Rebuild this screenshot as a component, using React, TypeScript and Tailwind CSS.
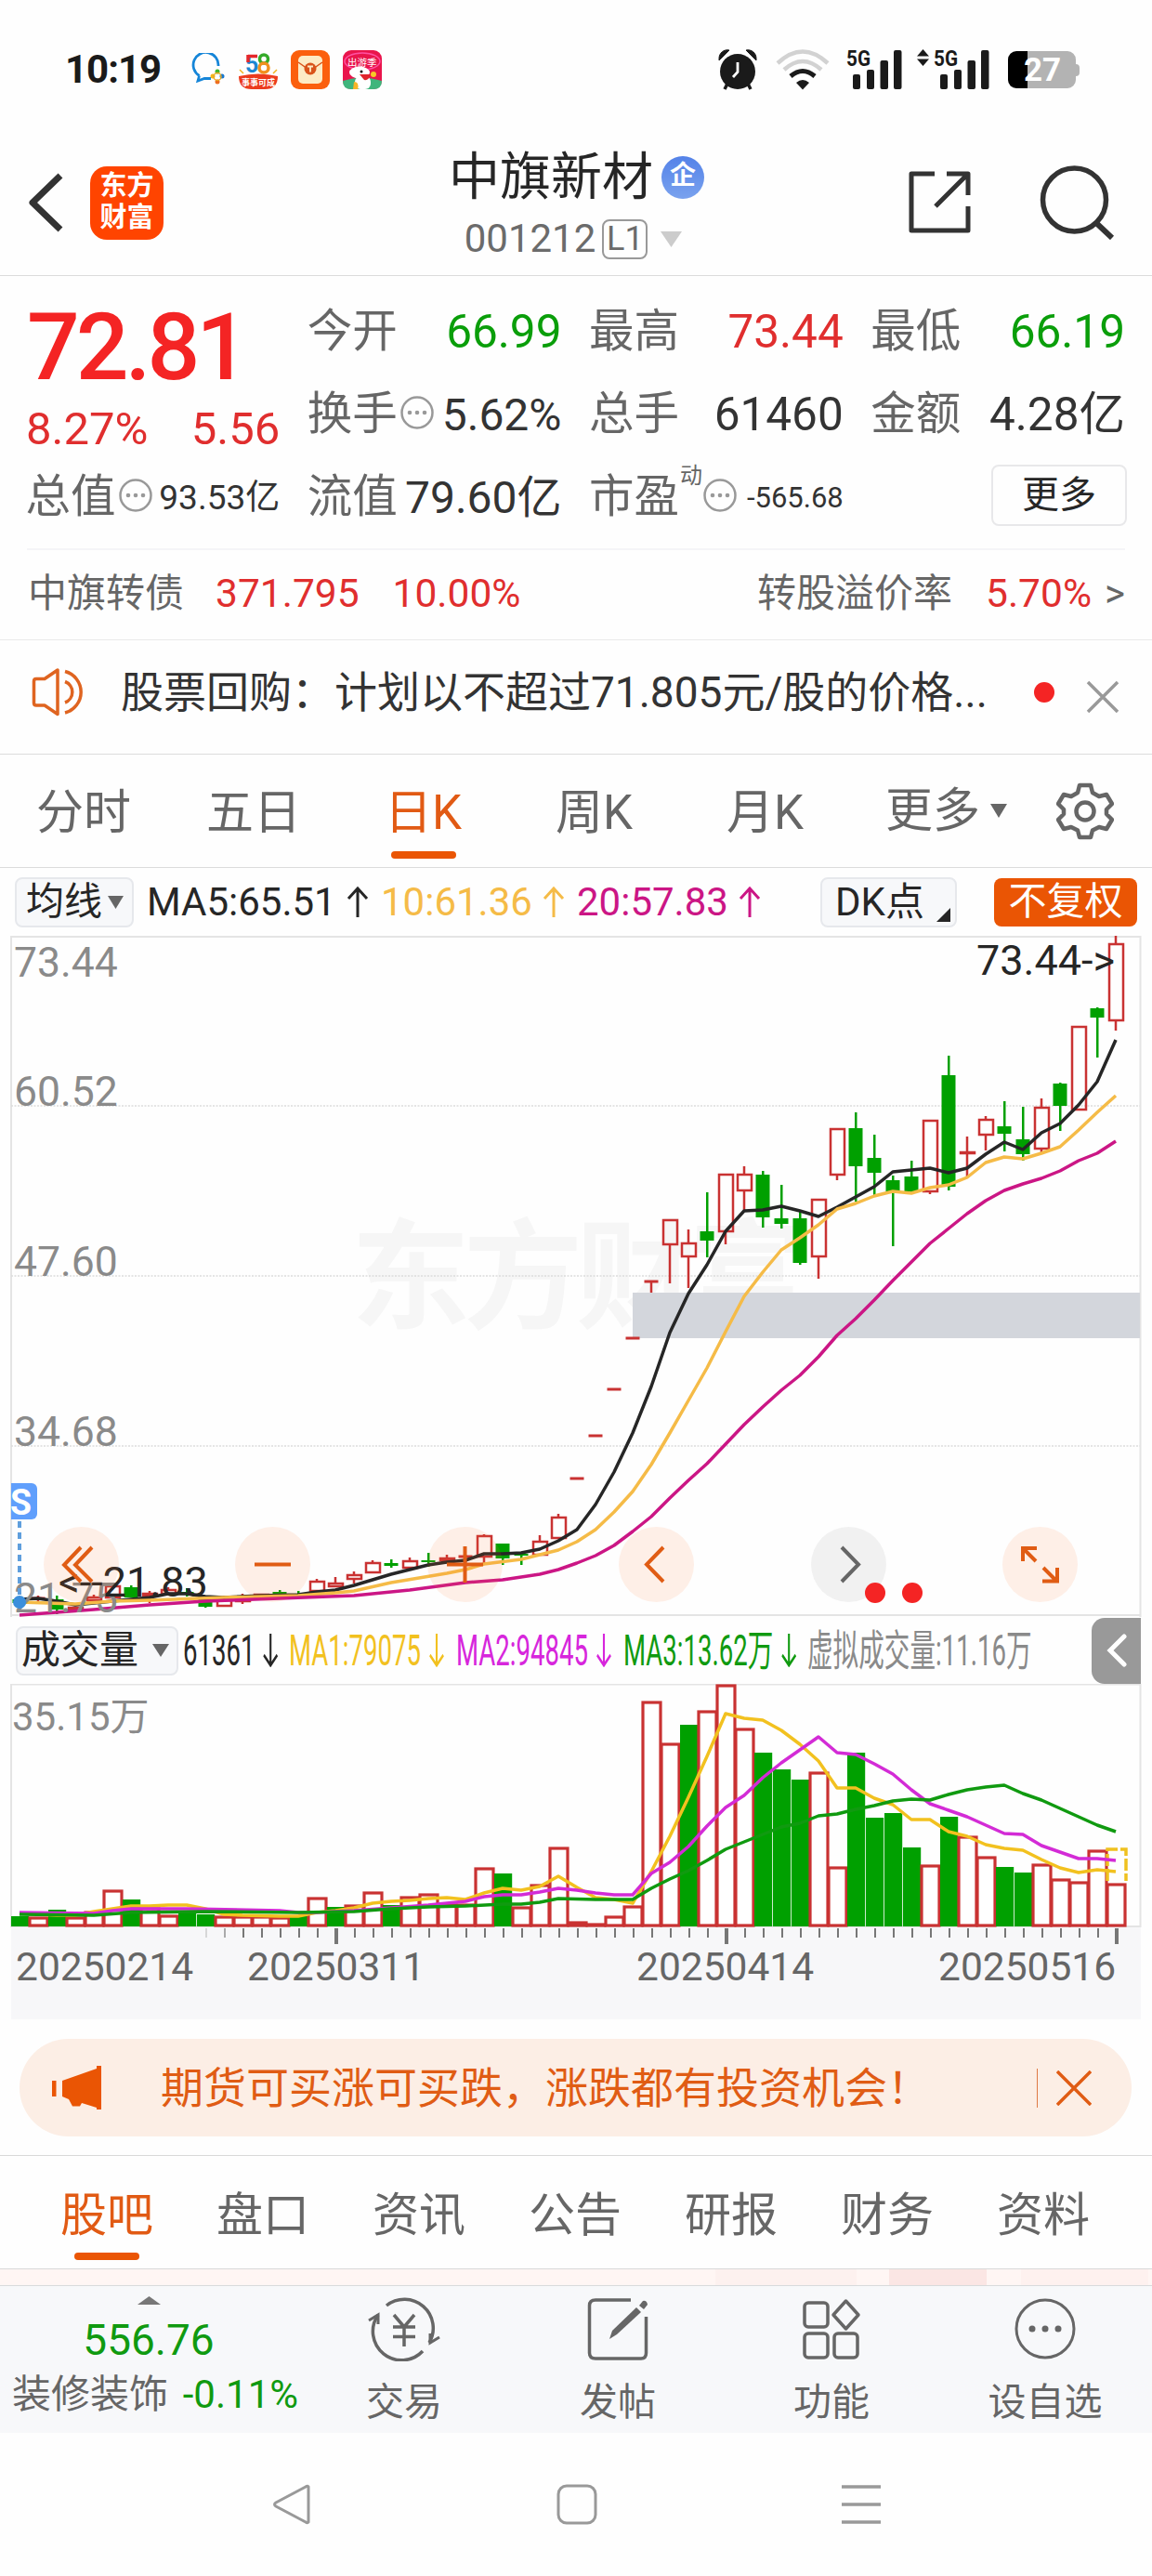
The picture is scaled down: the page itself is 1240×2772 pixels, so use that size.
import { ReactNode } from "react";

// [body top, body bottom, high, low, up?]
type Candle = [number, number, number, number, number];

const candles: Candle[] = [
  [1721, 1725, 1718, 1728, 0],
  [1720, 1722, 1717, 1724, 1],
  [1721, 1732, 1717, 1737, 0],
  [1729, 1733, 1729, 1733, 1],
  [1718, 1723, 1716, 1725, 1],
  [1706, 1720, 1703, 1720, 1],
  [1708, 1719, 1706, 1719, 0],
  [1714, 1718, 1712, 1725, 1],
  [1710, 1716, 1708, 1716, 1],
  [1713, 1716, 1709, 1718, 0],
  [1717, 1729, 1717, 1730, 0],
  [1721, 1729, 1717, 1729, 1],
  [1718, 1724, 1715, 1726, 1],
  [1715, 1718, 1715, 1718, 1],
  [1713, 1716, 1711, 1717, 0],
  [1715, 1717, 1712, 1718, 0],
  [1701, 1713, 1699, 1713, 1],
  [1703, 1708, 1697, 1708, 1],
  [1694, 1700, 1691, 1704, 1],
  [1681, 1693, 1679, 1693, 1],
  [1682, 1685, 1678, 1687, 0],
  [1679, 1688, 1676, 1688, 1],
  [1679, 1681, 1671, 1686, 0],
  [1676, 1680, 1673, 1680, 1],
  [1675, 1676, 1673, 1684, 1],
  [1652, 1676, 1651, 1682, 1],
  [1661, 1677, 1661, 1684, 0],
  [1672, 1674, 1670, 1684, 0],
  [1658, 1674, 1652, 1674, 1],
  [1632, 1656, 1629, 1656, 1],
  [1591, 1591, 1591, 1591, 1],
  [1545, 1545, 1545, 1545, 1],
  [1495, 1495, 1495, 1495, 1],
  [1440, 1440, 1440, 1440, 1],
  [1379, 1379, 1379, 1391, 1],
  [1312, 1340, 1312, 1381, 1],
  [1337, 1353, 1323, 1386, 1],
  [1325, 1335, 1283, 1353, 0],
  [1263, 1326, 1263, 1339, 1],
  [1263, 1282, 1255, 1303, 1],
  [1264, 1310, 1260, 1321, 0],
  [1311, 1317, 1275, 1322, 0],
  [1311, 1359, 1303, 1361, 0],
  [1290, 1353, 1290, 1376, 1],
  [1214, 1265, 1214, 1270, 1],
  [1214, 1255, 1197, 1293, 0],
  [1246, 1262, 1221, 1287, 0],
  [1270, 1282, 1265, 1341, 0],
  [1266, 1282, 1249, 1283, 0],
  [1205, 1283, 1205, 1285, 1],
  [1157, 1277, 1136, 1281, 0],
  [1239, 1242, 1223, 1266, 1],
  [1204, 1222, 1201, 1238, 1],
  [1212, 1220, 1185, 1239, 0],
  [1226, 1242, 1191, 1249, 0],
  [1191, 1237, 1182, 1240, 1],
  [1166, 1190, 1165, 1217, 0],
  [1104, 1195, 1104, 1195, 1],
  [1085, 1095, 1084, 1138, 0],
  [1015, 1099, 1007, 1109, 1],
];

const ma5 =
  "21,1721 41,1720 61,1723 81,1727 101,1725 121,1723 141,1721 161,1719 181,1715 201,1715 221,1718 241,1719 281,1717 321,1716 341,1713 361,1711 381,1706 401,1700 421,1694 441,1689 461,1684 481,1681 501,1679 521,1672 541,1672 561,1671 581,1667 601,1658 621,1646 641,1619 661,1584 681,1542 701,1492 721,1434 741,1392 761,1361 781,1325 801,1303 821,1302 841,1298 861,1303 881,1309 901,1299 921,1288 941,1277 961,1261 981,1259 1001,1257 1021,1262 1041,1257 1061,1242 1081,1229 1101,1237 1121,1219 1141,1209 1161,1189 1181,1164 1201,1119";
const ma10 =
  "21,1724 81,1726 121,1723 161,1722 241,1719 321,1717 361,1714 381,1712 421,1703 481,1693 501,1689 521,1683 561,1678 581,1673 601,1668 621,1659 641,1646 661,1627 681,1605 701,1576 721,1542 741,1507 761,1472 781,1433 801,1395 821,1369 841,1345 861,1332 881,1318 901,1301 921,1295 941,1287 961,1282 981,1284 1001,1278 1021,1275 1041,1267 1061,1251 1081,1245 1101,1247 1121,1241 1141,1234 1161,1216 1181,1197 1201,1179";
const ma20 =
  "21,1738 61,1735 101,1732 161,1727 221,1723 301,1720 381,1717 441,1711 501,1703 541,1700 581,1694 601,1689 621,1682 641,1674 661,1663 681,1648 701,1632 721,1612 741,1593 761,1575 781,1554 801,1533 821,1514 841,1496 861,1480 881,1460 901,1437 921,1419 941,1399 961,1378 981,1358 1001,1338 1021,1322 1041,1306 1061,1292 1081,1281 1101,1274 1121,1268 1141,1260 1161,1249 1181,1241 1201,1228";

// [top, up?]
const volumes: [number, number][] = [
  [2062, 0], [2063, 1], [2055, 0], [2063, 1], [2057, 1], [2034, 1], [2044, 0], [2053, 1], [2061, 1], [2058, 0],
  [2060, 0], [2062, 1], [2062, 1], [2062, 1], [2063, 1], [2062, 0], [2042, 1], [2052, 0], [2050, 1], [2036, 1],
  [2050, 0], [2041, 1], [2038, 1], [2049, 1], [2049, 1], [2010, 1], [2016, 0], [2052, 1], [2028, 1], [1988, 1],
  [2068, 1], [2070, 1], [2062, 1], [2051, 1], [1831, 1], [1876, 1], [1856, 0], [1841, 1], [1813, 1], [1860, 1],
  [1886, 0], [1904, 0], [1915, 0], [1907, 1], [2009, 1], [1886, 0], [1956, 0], [1951, 0], [1988, 0], [2007, 1],
  [1955, 0], [1976, 1], [1998, 1], [2009, 0], [2015, 0], [2006, 1], [2022, 1], [2025, 1], [1991, 1], [2027, 1],
];

const volMa1 =
  "21,2059 41,2060 61,2061 81,2061 101,2057 121,2054 141,2051 161,2051 181,2050 201,2050 221,2054 241,2060 261,2061 301,2062 321,2062 341,2058 361,2056 381,2053 401,2048 421,2046 441,2045 461,2043 481,2042 501,2044 521,2037 541,2032 561,2034 581,2030 601,2019 621,2031 641,2042 661,2044 681,2048 701,2014 721,1976 741,1934 761,1890 781,1844 801,1849 821,1851 841,1862 861,1877 881,1895 901,1924 921,1924 941,1935 961,1942 981,1958 1001,1958 1021,1971 1041,1976 1061,1985 1081,1989 1101,1991 1121,2001 1141,2010 1161,2015 1181,2012 1201,2014";
const volMa2 =
  "21,2058 101,2059 121,2056 141,2054 201,2054 301,2056 321,2058 341,2058 381,2056 421,2053 461,2050 501,2046 521,2041 541,2039 561,2039 581,2036 601,2032 621,2034 641,2037 661,2039 681,2039 701,2016 721,2004 741,1987 761,1965 781,1945 801,1932 821,1913 841,1897 861,1883 881,1869 901,1886 921,1888 941,1898 961,1909 981,1926 1001,1941 1021,1948 1041,1955 1061,1964 1081,1973 1101,1974 1121,1986 1141,1993 1161,2000 1181,2000 1201,2002";
const volMa3 =
  "21,2060 101,2061 141,2058 221,2057 321,2058 381,2057 421,2054 461,2052 501,2051 541,2049 561,2049 581,2047 601,2043 641,2044 681,2044 701,2032 721,2022 741,2013 761,2002 781,1990 801,1982 821,1974 841,1966 861,1962 881,1954 901,1952 921,1947 941,1943 961,1938 981,1936 1001,1937 1021,1931 1041,1926 1061,1923 1081,1921 1101,1930 1121,1937 1141,1946 1161,1955 1181,1964 1201,1971";

const barX = (i: number) => 21 + i * 20;

const SignalBars = () => (
  <svg width="60" height="44" viewBox="0 0 60 44" className="block overflow-visible">
    <text x="0" y="18" fontSize="23" fontWeight="700" fill="#1a1a1a" textLength="26" lengthAdjust="spacingAndGlyphs">
      5G
    </text>
    <rect x="7" y="27" width="8" height="16" rx="2" fill="#1a1a1a" />
    <rect x="22" y="22" width="8" height="21" rx="2" fill="#1a1a1a" />
    <rect x="36.5" y="12" width="8.500" height="31" rx="2" fill="#1a1a1a" />
    <rect x="51" y="1" width="8.500" height="42" rx="2" fill="#1a1a1a" />
  </svg>
);

const StatusBar = () => (
  <div className="h-[140px] pt-[10px] pl-[70px] pr-[77px] flex items-center justify-between">
    <div className="flex items-center">
      <span className="text-[42px] leading-none font-bold text-[#1a1a1a] w-[136px] -tracking-[1px]">10:19</span>
      <svg width="36" height="36" viewBox="0 0 36 36" className="mr-[15px]">
        <path d="M8.500 24.500 A13.500 13.500 0 1 1 29 14 M8.500 24.500 L7 30 L14 27.500 L21 27.500" fill="none" stroke="#1585d8" strokeWidth="2.800" />
        <circle cx="28" cy="20" r="2.500" fill="#3fb52a" />
        <circle cx="33" cy="25" r="2.500" fill="#1678d2" />
        <circle cx="28" cy="31" r="2.500" fill="#ee6d1f" />
        <circle cx="23" cy="25" r="2.500" fill="#f5b61c" />
        <circle cx="28" cy="25.500" r="4" fill="none" stroke="#e9a722" strokeWidth="1.500" />
      </svg>
      <svg width="42" height="42" viewBox="0 0 42 42" className="mr-[14px] overflow-visible">
        <text x="7" y="24" fontSize="25" fontWeight="700" fill="#1b87d2">5</text>
        <path d="M10 6.500 h10 M10 5 v8" stroke="#e5262a" strokeWidth="3.500" fill="none" />
        <circle cx="27" cy="9.500" r="4.500" fill="none" stroke="#35aa29" strokeWidth="3.500" />
        <circle cx="27" cy="19" r="5" fill="none" stroke="#f1901d" strokeWidth="3.500" />
        <path d="M1 21 l4 4 M41 21 l-4 4" stroke="#f1b51d" strokeWidth="1.500" />
        <path d="M0 28 Q21 23 42 28 Q42 42 28 42 H14 Q0 42 0 28Z" fill="#ec3b1d" />
        <text x="3" y="37.500" fontSize="9" fontWeight="700" fill="#fff">事事可成</text>
      </svg>
      <svg width="42" height="42" viewBox="0 0 42 42" className="mr-[14px]">
        <rect width="42" height="42" rx="9" fill="#fb5f0d" />
        <rect x="8" y="6" width="26" height="30" rx="5" fill="#fdebc5" />
        <path d="M8 13 L21 22 L34 13" fill="none" stroke="#d9531a" strokeWidth="1.500" />
        <circle cx="21" cy="20" r="6.500" fill="#d9531a" />
        <path d="M18 17.500 h6 M21 17.500 v6" stroke="#fdebc5" strokeWidth="1.800" />
      </svg>
      <svg width="42" height="42" viewBox="0 0 42 42">
        <rect width="42" height="42" rx="9" fill="#e9154c" />
        <path d="M0 33 Q21 26 42 33 Q42 42 33 42 H9 Q0 42 0 33Z" fill="#3fb57c" />
        <ellipse cx="21" cy="12" rx="19" ry="9" fill="none" stroke="#ff4fa0" strokeWidth="1.500" />
        <text x="5" y="16.500" fontSize="10.500" fill="#fff">出游季</text>
        <ellipse cx="18" cy="24" rx="11" ry="6.500" fill="#fff" />
        <rect x="13" y="28" width="17" height="14" rx="6" fill="#fff" />
        <path d="M18 26 h12 q-2 7 -7 6z" fill="#e0242c" />
        <circle cx="20" cy="23" r="1.500" fill="#111" />
        <circle cx="33" cy="26" r="3" fill="#f7c927" />
        <path d="M12 34 q6 0 4 8 h-5z" fill="#f7b527" />
      </svg>
    </div>
    <div className="flex items-center">
      <svg width="42" height="44" viewBox="0 0 42 44" className="mr-[20px]">
        <path d="M1 10 A9 9 0 0 1 12 1 L1 12Z M41 10 A9 9 0 0 0 30 1 L41 12Z" fill="#1a1a1a" stroke="#1a1a1a" strokeWidth="1" />
        <circle cx="21" cy="24" r="19" fill="#1a1a1a" />
        <path d="M10 37 L7 43 M32 37 L35 43" stroke="#1a1a1a" strokeWidth="3.500" />
        <path d="M21 14 V24.500 L16 30" fill="none" stroke="#fff" strokeWidth="2.800" />
      </svg>
      <svg width="58" height="44" viewBox="0 0 58 44" className="mr-[18px]">
        <path d="M2 15 Q29 -10 56 15" fill="none" stroke="#d2d2d2" strokeWidth="4.500" />
        <path d="M9 22 Q29 4 49 22" fill="none" stroke="#d2d2d2" strokeWidth="4.500" />
        <path d="M16 29 Q29 18 42 29" fill="none" stroke="#1a1a1a" strokeWidth="5" />
        <path d="M22 36 Q29 30 36 36 L29 43.500Z" fill="#1a1a1a" />
      </svg>
      <SignalBars />
      <svg width="13" height="44" viewBox="0 0 13 44" className="ml-[16px] mr-[5px]">
        <path d="M6.500 0 L13 7.500 H0Z M6.500 18 L13 10.500 H0Z" fill="#1a1a1a" />
      </svg>
      <SignalBars />
      <svg width="78" height="40" viewBox="0 0 78 40" className="ml-[20px] overflow-visible">
        <path d="M21 0 H64 a9 9 0 0 1 9 9 V14 a4 4 0 0 1 4 4 V23 a4 4 0 0 1 -4 4 V31 a9 9 0 0 1 -9 9 H21Z" fill="#b3b3b3" />
        <path d="M21 0 H9 a9 9 0 0 0 -9 9 V31 a9 9 0 0 0 9 9 H21Z" fill="#000" />
        <text x="17" y="32" fontSize="35" fontWeight="700" fill="#fff">27</text>
      </svg>
    </div>
  </div>
);

const Header = () => (
  <div className="h-[157px] border-b border-[#dcdcdc] flex items-center justify-between pl-[30px] pr-[38px]">
    <div className="flex items-center w-[232px]">
      <svg width="40" height="64" viewBox="0 0 40 64" className="mr-[27px]">
        <path d="M35 3 L5 32 L35 61" fill="none" stroke="#333" strokeWidth="7" strokeLinejoin="round" />
      </svg>
      <div className="w-[79px] h-[79px] rounded-[18px] bg-[#ff4400] text-white font-bold text-[29px] leading-[34px] flex flex-col items-center justify-center pb-[3px]">
        <span>东方</span>
        <span>财富</span>
      </div>
    </div>
    <div className="flex flex-col items-center">
      <div className="flex items-center gap-[9px] pl-[1px]">
        <span className="text-[55px] leading-[64px] text-[#262626] pb-[5px]">中旗新材</span>
        <span className="w-[46px] h-[46px] mb-[3px] rounded-full bg-gradient-to-b from-[#5482e8] to-[#7aa2ee] text-white font-bold text-[28px] leading-[42px] text-center">
          企
        </span>
      </div>
      <div className="flex items-center mt-[9px] -ml-[5px]">
        <span className="text-[42px] leading-none text-[#6b6b6b]">001212</span>
        <span className="ml-[7px] w-[49px] h-[43px] border-2 border-[#999] rounded-[8px] text-[36px] leading-[39px] text-center text-[#6b6b6b]">
          L1
        </span>
        <svg width="25" height="17" viewBox="0 0 25 17" className="ml-[13px]">
          <path d="M1 0 H24 L12.500 17Z" fill="#ccc" />
        </svg>
      </div>
    </div>
    <div className="flex items-center w-[224px] gap-[73px]">
      <svg width="68" height="68" viewBox="0 0 68 68" className="shrink-0">
        <path d="M28 3 H3 V64 H64 V38 M41 3 H64 V26 M63 4 L29 38" fill="none" stroke="#333" strokeWidth="5" strokeLinejoin="round" />
      </svg>
      <svg width="82" height="80" viewBox="0 0 82 80" className="shrink-0">
        <circle cx="37.500" cy="37" r="34" fill="none" stroke="#333" strokeWidth="5.500" />
        <path d="M60 61 L78 78" stroke="#333" strokeWidth="6" />
      </svg>
    </div>
  </div>
);

const InfoIcon = ({ className }: { className?: string }) => (
  <svg width="36" height="36" viewBox="0 0 36 36" className={`shrink-0 relative -top-[3px] ${className ?? ""}`}>
    <circle cx="18" cy="18" r="16.500" fill="none" stroke="#999" strokeWidth="2.500" />
    <circle cx="10" cy="18" r="2.300" fill="#999" />
    <circle cx="18" cy="18" r="2.300" fill="#999" />
    <circle cx="26" cy="18" r="2.300" fill="#999" />
  </svg>
);

interface CellProps {
  label: ReactNode;
  value: string;
  valueClass: string;
}

const Cell = ({ label, value, valueClass }: CellProps) => (
  <div className="h-[89px] flex items-center justify-between whitespace-nowrap leading-none">
    <span className="flex items-center text-[48.5px] text-[#666] -ml-[1.5px]">{label}</span>
    <span className={valueClass}>{value}</span>
  </div>
);

const Quote = () => (
  <div className="pt-[16px] px-[29px]">
    <div className="grid grid-cols-4 gap-x-[31px]">
      <div className="flex flex-col">
        <div className="h-[118px] pt-[3px] flex items-center text-[100px] leading-none font-medium -tracking-[4px] text-[#f42424]">
          72.81
        </div>
        <div className="h-[60px] flex items-center justify-between text-[49px] leading-none text-[#e02e2e] -ml-[1px]">
          <span>8.27%</span>
          <span>5.56</span>
        </div>
        <Cell label={<>总值<InfoIcon className="ml-[3px]" /></>} value="93.53亿" valueClass="text-[37px] text-[#333]" />
      </div>
      <div>
        <Cell label="今开" value="66.99" valueClass="text-[49.5px] text-[#0a9e0a]" />
        <Cell label={<>换手<InfoIcon className="ml-[3px]" /></>} value="5.62%" valueClass="text-[48px] text-[#333]" />
        <Cell label="流值" value="79.60亿" valueClass="text-[48px] text-[#333]" />
      </div>
      <div>
        <Cell label="最高" value="73.44" valueClass="text-[49.5px] text-[#e02e2e]" />
        <Cell label="总手" value="61460" valueClass="text-[49.5px] text-[#333]" />
        <Cell
          label={
            <>
              市盈<span className="text-[24px] self-start -mt-[11px] ml-[1px]">动</span>
              <InfoIcon className="ml-[1px]" />
            </>
          }
          value="-565.68"
          valueClass="text-[31px] text-[#333]"
        />
      </div>
      <div>
        <Cell label="最低" value="66.19" valueClass="text-[49.5px] text-[#0a9e0a]" />
        <Cell label="金额" value="4.28亿" valueClass="text-[49.5px] text-[#333]" />
        <div className="h-[89px] flex items-center justify-end pb-[5px]">
          <button className="w-[146px] h-[66px] -mr-[2px] border-2 border-[#e8e8ea] rounded-[8px] text-[40px] leading-none text-[#262626]">
            更多
          </button>
        </div>
      </div>
    </div>
    <div className="h-[2px] mt-[10px] bg-[#f5f5f7]" />
  </div>
);

const BondRow = () => (
  <div className="h-[97px] pb-[2px] pl-[30px] pr-[29px] border-b border-[#eaeaea] flex items-center text-[42px] leading-none text-[#666]">
    <span>中旗转债</span>
    <span className="ml-[34px] text-[42.5px] text-[#e02e2e]">371.795</span>
    <span className="ml-[36px] text-[42.5px] text-[#e02e2e]">10.00%</span>
    <span className="ml-auto">转股溢价率</span>
    <span className="ml-[36px] text-[42.5px] text-[#e02e2e]">5.70%</span>
    <span className="ml-[14px]">&gt;</span>
  </div>
);

const NoticeRow = () => (
  <div className="h-[123px] pb-[11px] pl-[34px] pr-[35px] border-b border-[#dcdcdc] flex items-center text-[46px] leading-none text-[#333]">
    <svg width="60" height="52" viewBox="0 0 60 52">
      <path d="M2.500 14 Q2.500 11.500 5 11.500 H14 L28 2 V49.500 L14 40 H5 Q2.500 40 2.500 37.500Z" fill="none" stroke="#df6420" strokeWidth="3.500" strokeLinejoin="round" />
      <path d="M36 14.500 A12 12 0 0 1 36 37 M36 3.500 A23 23 0 0 1 36 48" fill="none" stroke="#df6420" strokeWidth="3.500" />
    </svg>
    <span className="ml-[36px] whitespace-nowrap">股票回购：计划以不超过71.805元/股的价格...</span>
    <span className="ml-auto w-[22px] h-[22px] rounded-full bg-[#f42424]" />
    <svg width="36" height="36" viewBox="0 0 36 36" className="ml-[34px] relative top-[5px]">
      <path d="M2 2 L34 34 M34 2 L2 34" stroke="#999" strokeWidth="3.500" />
    </svg>
  </div>
);

const periods = ["分时", "五日", "日K", "周K", "月K"];

const PeriodTabs = () => (
  <div className="h-[122px] border-b border-[#dcdcdc] pl-[39px] pr-[41px] flex text-[51px] leading-none text-[#666]">
    {periods.map((p) => (
      <div key={p} className={p.endsWith("K") ? "w-[184px] h-full" : "w-[183px] h-full"}>
        <div className={`h-[104px] pt-[37px] ${p.endsWith("K") ? "pl-[9px]" : ""} ${p === "日K" ? "text-[#e15a14]" : ""}`}>
          {p}
        </div>
        {p === "日K" && <div className="w-[70px] h-[8px] rounded-full bg-[#ea5504] ml-[16px]" />}
      </div>
    ))}
    <div className="h-full flex items-center -ml-[4px]">
      更多
      <svg width="18" height="15" viewBox="0 0 18 15" className="ml-[11px]">
        <path d="M0 0 H18 L9 15Z" fill="#666" />
      </svg>
    </div>
    <svg width="62" height="62" viewBox="0 0 62 62" className="ml-auto self-center">
      <path
        d="M25 3 H37 L39 11 L46 15 L54 13 L60 23 L54 29 V34 L60 40 L54 50 L46 48 L39 51.500 L37 59 H25 L23 51.500 L16 48 L8 50 L2 40 L8 34 V29 L2 23 L8 13 L16 15 L23 11Z"
        fill="none"
        stroke="#666"
        strokeWidth="4.500"
        strokeLinejoin="round"
      />
      <circle cx="31" cy="31" r="9.500" fill="none" stroke="#666" strokeWidth="4.500" />
    </svg>
  </div>
);

const UpArrow = ({ className }: { className: string }) => (
  <svg width="24" height="34" viewBox="0 0 24 34" className={className}>
    <path d="M12 33 V2 M2 13 L12 2 L22 13" fill="none" stroke="currentColor" strokeWidth="3" />
  </svg>
);

const MaRow = () => (
  <div className="h-[73px] pl-[16px] pr-[16px] flex items-center text-[42px] leading-none text-[#262626]">
    <div className="w-[128px] h-[54px] rounded-[8px] border-2 border-[#e6e8ec] bg-[#f7f8fa] flex items-center pl-[10px]">
      <span className="text-[41px]">均线</span>
      <svg width="17" height="14" viewBox="0 0 17 14" className="ml-[6px]">
        <path d="M0 0 H17 L8.500 14Z" fill="#666" />
      </svg>
    </div>
    <span className="ml-[14px] w-[217px]">MA5:65.51</span>
    <UpArrow className="-ml-[2px]" />
    <span className="ml-[13px] w-[175px] text-[#f5bb47]">10:61.36</span>
    <UpArrow className="text-[#f5bb47] -ml-[1px]" />
    <span className="ml-[13px] w-[175px] text-[#cb1685]">20:57.83</span>
    <UpArrow className="text-[#cb1685] -ml-[1px]" />
    <div className="ml-auto w-[147px] h-[54px] rounded-[8px] border-2 border-[#e6e8ec] bg-[#f7f8fa] flex items-center justify-between pl-[14px] pr-[5px]">
      DK点
      <svg width="15" height="15" viewBox="0 0 15 15" className="self-end mb-[4px]">
        <path d="M15 0 V15 H0Z" fill="#262626" />
      </svg>
    </div>
    <div className="ml-[40px] w-[154px] h-[52px] rounded-[8px] bg-[#ea5504] text-white text-[41px] flex items-center justify-center">
      不复权
    </div>
  </div>
);

const CandleChart = () => (
  <svg width="1240" height="733" viewBox="0 1007 1240 733" className="block">
    <text x="378" y="1420" fontSize="128" fontWeight="700" fill="#f6f6f6" letterSpacing="-7">
      东方财富
    </text>
    <path d="M12 1740 V1008 H1227.500 V1740" fill="none" stroke="#e4e4e4" strokeWidth="2" />
    <path d="M12 1738 H1227" stroke="#e4e4e4" strokeWidth="2" />
    {[1190, 1373, 1556].map((y) => (
      <path key={y} d={`M12 ${y} H1227`} stroke="#dcdcdc" strokeWidth="1.500" strokeDasharray="2 1.500" />
    ))}
    <rect x="681" y="1391" width="546" height="49" fill="#d3d6dc" />
    {candles.map(([top, bottom, high, low, up], i) => {
      const x = barX(i);
      if (up) {
        return (
          <g key={i} stroke="#c93232" strokeWidth="2.500" fill="none">
            <path d={`M${x} ${high} V${top} M${x} ${bottom} V${low}`} />
            {bottom - top < 3 ? (
              <path d={`M${x - 7.500} ${top} h15`} strokeWidth="3" />
            ) : (
              <rect x={x - 7} y={top + 1} width="15" height={bottom - top - 2} />
            )}
          </g>
        );
      }
      return (
        <g key={i} fill="#00a000">
          <rect x={x - 1} y={high} width="2.500" height={low - high} />
          <rect x={x - 7.500} y={top} width="15" height={bottom - top} />
        </g>
      );
    })}
    <g fill="none" strokeWidth="3.500" strokeLinejoin="round">
      <polyline points={ma5} stroke="#262626" />
      <polyline points={ma10} stroke="#f5bb47" />
      <polyline points={ma20} stroke="#cb1685" />
    </g>
    <g fontSize="44.500" fill="#8a8a8a">
      <text x="15" y="1051">73.44</text>
      <text x="15" y="1190">60.52</text>
      <text x="15" y="1373">47.60</text>
      <text x="15" y="1556">34.68</text>
      <text x="15" y="1735">21.75</text>
    </g>
    <g fontSize="45" fill="#262626">
      <text x="1051" y="1049">73.44-&gt;</text>
      <text x="63" y="1718">&lt;--21.83</text>
    </g>
    <path d="M21 1637 V1718" stroke="#5f9fdd" strokeWidth="4" strokeDasharray="7 5" />
    <circle cx="21" cy="1724" r="7" fill="#3b8fdc" />
    <path d="M12 1596 H34 a6 6 0 0 1 6 6 V1629 a6 6 0 0 1 -6 6 H12Z" fill="#609ffc" />
    <text x="11" y="1630" fontSize="38" fontWeight="700" fill="#fff" textLength="23" lengthAdjust="spacingAndGlyphs">
      S
    </text>
  </svg>
);

const controls: { name: string; d: string; gray?: boolean }[] = [
  { name: "oldest", d: "M40 22 L22 41 L40 59 M52 22 L34 41 L52 59" },
  { name: "zoomOut", d: "M21 40.500 H60" },
  { name: "zoomIn", d: "M21 40.500 H60 M40.500 21 V60" },
  { name: "prev", d: "M48 22 L30 40.500 L48 59" },
  { name: "next", d: "M33 22 L51 40.500 L33 59", gray: true },
  { name: "full", d: "M22 37 V23 H37 M22 23 L36 37 M44 44 L58 58 M59 44 V58.500 H43" },
];

const ChartArea = () => (
  <div className="relative">
    <CandleChart />
    <div className="absolute left-[47px] right-[80px] top-[636px] flex justify-between">
      {controls.map((c) => (
        <svg key={c.name} width="81" height="81" viewBox="0 0 81 81">
          <circle cx="40.500" cy="40.500" r="40.500" fill={c.gray ? "#000" : "#ff7a2a"} fillOpacity={c.gray ? 0.05 : 0.11} />
          <path d={c.d} fill="none" stroke={c.gray ? "#666" : "#e05c14"} strokeWidth="4" />
        </svg>
      ))}
    </div>
    <div className="absolute left-[931px] top-[696px] flex gap-[18px]">
      <span className="w-[22px] h-[22px] rounded-full bg-[#f42424]" />
      <span className="w-[22px] h-[22px] rounded-full bg-[#f42424]" />
    </div>
  </div>
);

const volumeItems = [
  { text: "61361", arrow: true, box: "w-[114px] text-[#262626]" },
  { text: "MA1:79075", arrow: true, box: "w-[180px] text-[#f2c11f]" },
  { text: "MA2:94845", arrow: true, box: "w-[180px] text-[#d726dc]" },
  { text: "MA3:13.62万", arrow: true, box: "w-[198px] text-[#109a10]" },
  { text: "虚拟成交量:11.16万", arrow: false, box: "w-[240px] text-[#8a8a8a]" },
];

const VolumeHeader = () => (
  <div className="h-[72px] pl-[17px] pr-[12px] flex items-center leading-none">
    <div className="w-[175px] h-[53px] rounded-[8px] border-2 border-[#e6e8ec] bg-[#f7f8fa] flex items-center pl-[4px] text-[42px] text-[#262626]">
      成交量
      <svg width="18" height="14" viewBox="0 0 18 14" className="ml-[15px]">
        <path d="M0 0 H18 L9 14Z" fill="#666" />
      </svg>
    </div>
    <div className="flex ml-[5px]">
      {volumeItems.map((v) => (
        <div key={v.text} className={v.box}>
          <span className="flex items-center w-max origin-left scale-x-[0.6] text-[46px]">
            {v.text}
            {v.arrow && (
              <svg width="28" height="36" viewBox="0 0 28 36" className="ml-[14px]">
                <path d="M14 0 V34 M2 23 L14 34 L26 23" fill="none" stroke="currentColor" strokeWidth="3.500" />
              </svg>
            )}
          </span>
        </div>
      ))}
    </div>
    <div className="ml-auto w-[53px] h-[71px] rounded-l-[14px] bg-[#999] flex items-center justify-center">
      <svg width="22" height="36" viewBox="0 0 22 36">
        <path d="M19 3 L4 18 L19 33" fill="none" stroke="#fff" strokeWidth="5" strokeLinecap="round" />
      </svg>
    </div>
  </div>
);

const ticks = Array.from({ length: 50 }, (_, i) => 222 + i * 20);

const VolumeChart = () => (
  <svg width="1240" height="361" viewBox="0 1812 1240 361" className="block">
    <path d="M12 2073 V1812.500 H1227.500 V2073Z" fill="none" stroke="#e4e4e4" strokeWidth="2" />
    <rect x="12" y="2074" width="1216" height="99" fill="#f7f7f9" />
    <text x="13" y="1862" fontSize="42" fill="#8a8a8a">
      35.15万
    </text>
    {volumes.map(([top, up], i) =>
      up ? (
        <rect key={i} x={barX(i) - 9} y={top + 1} width="19" height={2071 - top} fill="#fff" stroke="#c93232" strokeWidth="3.200" />
      ) : (
        <rect key={i} x={barX(i) - 9} y={top} width="19.200" height={2073 - top} fill="#00a000" />
      ),
    )}
    <path d="M1192 2024 V1990 H1212 V2024" fill="none" stroke="#efc11f" strokeWidth="3.500" strokeDasharray="13 3" />
    <g fill="none" strokeWidth="3.500" strokeLinejoin="round">
      <polyline points={volMa1} stroke="#f2c11f" />
      <polyline points={volMa2} stroke="#d32bd6" />
      <polyline points={volMa3} stroke="#109a10" />
    </g>
    {ticks.map((x, i) => {
      const major = [362, 782, 1202].includes(x);
      return (
        <path
          key={x}
          d={`M${x} 2075 V${major ? 2092 : 2085}`}
          stroke="#777"
          strokeOpacity={i === 0 ? 0.25 : i === 1 ? 0.6 : 1}
          strokeWidth={major ? 4 : 2}
        />
      );
    })}
    <g fontSize="42.500" fill="#666">
      <text x="17" y="2131">20250214</text>
      <text x="266" y="2131">20250311</text>
      <text x="685" y="2131">20250414</text>
      <text x="1010" y="2131">20250516</text>
    </g>
  </svg>
);

const Banner = () => (
  <div className="mt-[21px] ml-[21px] mr-[22px] h-[105px] rounded-full bg-[#fceee5] flex items-center pl-[35px] pr-[43px] text-[46px] leading-none text-[#e05c14]">
    <svg width="54" height="48" viewBox="0 0 54 48">
      <path d="M0 16 H4.500 V33 H0Z M11 16 L48 3 V0 H53 V47 H48 L48 45 L32 40 L30 43.500 H22 L18 36 L11 33Z" fill="#ea5504" />
    </svg>
    <span className="ml-[63px] whitespace-nowrap">期货可买涨可买跌，涨跌都有投资机会！</span>
    <span className="ml-auto w-[1.5px] h-[42px] bg-[#df7a45]" />
    <svg width="38" height="38" viewBox="0 0 38 38" className="ml-[20px]">
      <path d="M1 1 L37 37 M37 1 L1 37" stroke="#e05c14" strokeWidth="3.500" />
    </svg>
  </div>
);

const sections = ["股吧", "盘口", "资讯", "公告", "研报", "财务", "资料"];

const SectionTabs = () => (
  <div className="mt-[20px] h-[123px] border-y border-[#d8d8d8] flex pl-[31px] pr-[33px] text-[50px] leading-none text-[#666]">
    {sections.map((s, i) => (
      <div key={s} className="flex-1 flex flex-col items-center">
        <div className={i === 0 ? "h-[104px] pt-[39px] text-[#e15a14]" : "h-[104px] pt-[39px]"}>{s}</div>
        {i === 0 && <div className="w-[70px] h-[8px] rounded-full bg-[#ea5504]" />}
      </div>
    ))}
  </div>
);

const PinkStrip = () => (
  <div className="h-[18px] bg-[#fff6f4] border-b border-[#d8dadc] flex">
    <div className="ml-[770px] w-[152px] bg-[#fdf1ef]" />
    <div className="ml-[35px] w-[105px] bg-[#fbe6e4]" />
    <div className="ml-[37px] w-[137px] bg-[#fef1ef]" />
  </div>
);

const Action = ({ label, children }: { label: string; children: ReactNode }) => (
  <div className="w-[230px] h-full flex flex-col items-center pt-[11px]">
    <svg width="80" height="70" viewBox="0 0 80 70" fill="none" stroke="#666" strokeWidth="3.500">
      {children}
    </svg>
    <span className="mt-[24px] text-[41px] leading-none text-[#666]">{label}</span>
  </div>
);

const BottomBar = () => (
  <div className="h-[158px] bg-[#f7f8fa] flex leading-none">
    <div className="w-[320px] flex flex-col items-center pt-[11px]">
      <svg width="25" height="9" viewBox="0 0 25 9">
        <path d="M12.500 0 L25 9 H0Z" fill="#777" />
      </svg>
      <span className="mt-[15px] text-[46px] text-[#109a10]">556.76</span>
      <div className="mt-[15px] flex items-center text-[42px] ml-[14px] w-[308px] justify-between">
        <span className="text-[#666]">装修装饰</span>
        <span className="text-[#109a10]">-0.11%</span>
      </div>
    </div>
    <Action label="交易">
      <path d="M21 10 A31 31 0 0 1 67 50 M60 59 A31 31 0 0 1 12 20" />
      <path d="M2 26 L12 20 L12 30 M78 44 L68 50 L68 40" strokeWidth="3" />
      <path d="M29 20 L40 33 L51 20 M40 33 V54 M28 33 H52 M28 43.500 H52" />
    </Action>
    <Action label="发帖">
      <path d="M54 4 H16 Q9.500 4 9.500 10 V61 Q9.500 67 16 67 H65 Q70.500 67 70.500 61 V22" />
      <path d="M31 46 L34 37 L60 12 L65 17 L39 41Z" fill="#666" stroke="none" />
      <path d="M63 10 L67 5 Q71 4 72 9 L68 14Z" fill="#666" stroke="none" />
    </Action>
    <Action label="功能">
      <rect x="11" y="7" width="25" height="26" rx="4" />
      <rect x="11" y="40" width="25" height="26" rx="4" />
      <rect x="43" y="40" width="25" height="26" rx="4" />
      <path d="M55.500 5 L69 20 L55.500 35 L42 20Z" strokeLinejoin="round" />
    </Action>
    <Action label="设自选">
      <circle cx="40" cy="35" r="31" strokeWidth="3" />
      <g fill="#666" stroke="none">
        <circle cx="26" cy="35" r="3.500" />
        <circle cx="40" cy="35" r="3.500" />
        <circle cx="54" cy="35" r="3.500" />
      </g>
    </Action>
  </div>
);

const SystemNav = () => (
  <div className="h-[154px] flex items-center justify-between pl-[292px] pr-[291px]">
    <svg width="44" height="44" viewBox="0 0 44 44" fill="none" stroke="#999" strokeWidth="3">
      <path d="M40 3 V41 Q39 42.500 37 41 L5 24 Q2 22 5 20 L37 3 Q39 1.500 40 3Z" />
    </svg>
    <svg width="44" height="44" viewBox="0 0 44 44" fill="none" stroke="#999" strokeWidth="3">
      <rect x="2" y="2" width="40" height="40" rx="9" />
    </svg>
    <svg width="44" height="44" viewBox="0 0 44 44" stroke="#999" strokeWidth="3.500">
      <path d="M1 3 H43 M1 22 H43 M1 41 H43" />
    </svg>
  </div>
);

const App = () => {
  return (
    <div className="w-[1240px] h-[2772px] overflow-hidden bg-[#fefefe] font-['Roboto','Noto_Sans_CJK_SC',sans-serif]">
      <StatusBar />
      <Header />
      <Quote />
      <BondRow />
      <NoticeRow />
      <PeriodTabs />
      <MaRow />
      <ChartArea />
      <VolumeHeader />
      <VolumeChart />
      <Banner />
      <SectionTabs />
      <PinkStrip />
      <BottomBar />
      <SystemNav />
    </div>
  );
};
export default App;
